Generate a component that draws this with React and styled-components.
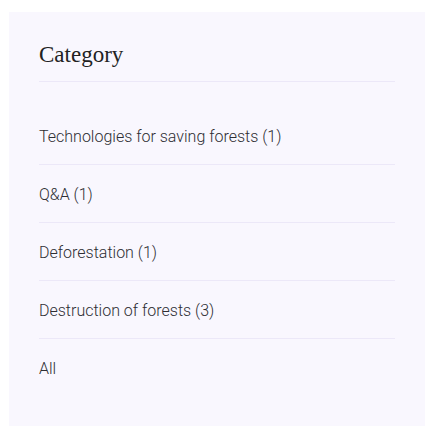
import React from 'react'
import styled, {createGlobalStyle} from 'styled-components'

const GlobalStyle = createGlobalStyle`
  body {
    margin: 0;
    background: #ffffff;
  }
`

const categories = [
    {name: 'Technologies for saving forests', count: 1},
    {name: 'Q&A', count: 1},
    {name: 'Deforestation', count: 1},
    {name: 'Destruction of forests', count: 3},
    {name: 'All'},
]

const Widget = styled.aside`
  box-sizing: border-box;
  width: 416px;
  margin: 12px 0 0 9px;
  padding: 30px 30px 30px;
  background: #f9f7fe;
`

const Title = styled.h3`
  margin: 0;
  padding-bottom: 13px;
  border-bottom: 1px solid #ece8f8;
  font-family: "Liberation Serif", "DejaVu Serif", serif;
  font-weight: 400;
  font-size: 23px;
  line-height: 26px;
  color: #222222;
`

const List = styled.ul`
  list-style: none;
  margin: 25px 0 0;
  padding: 0;
`

const Item = styled.li`
  padding: 20px 0 17px;
  border-bottom: ${props => props.last ? 'none' : '1px solid #ece8f8'};
  font-family: Roboto, "Liberation Sans", sans-serif;
  font-weight: 300;
  font-size: 16px;
  line-height: 20px;
  color: #2e2e33;
`

function CategoryWidget() {
  return (
    <Widget>
      <GlobalStyle />
      <Title>Category</Title>
      <List>
        {
          categories.map((cat, i) => {
            return (
              <Item key={cat.name} last={i === categories.length - 1}>
                {cat.count ? `${cat.name} (${cat.count})` : cat.name}
              </Item>
            )
          })
        }
      </List>
    </Widget>
  )
}

export default CategoryWidget
